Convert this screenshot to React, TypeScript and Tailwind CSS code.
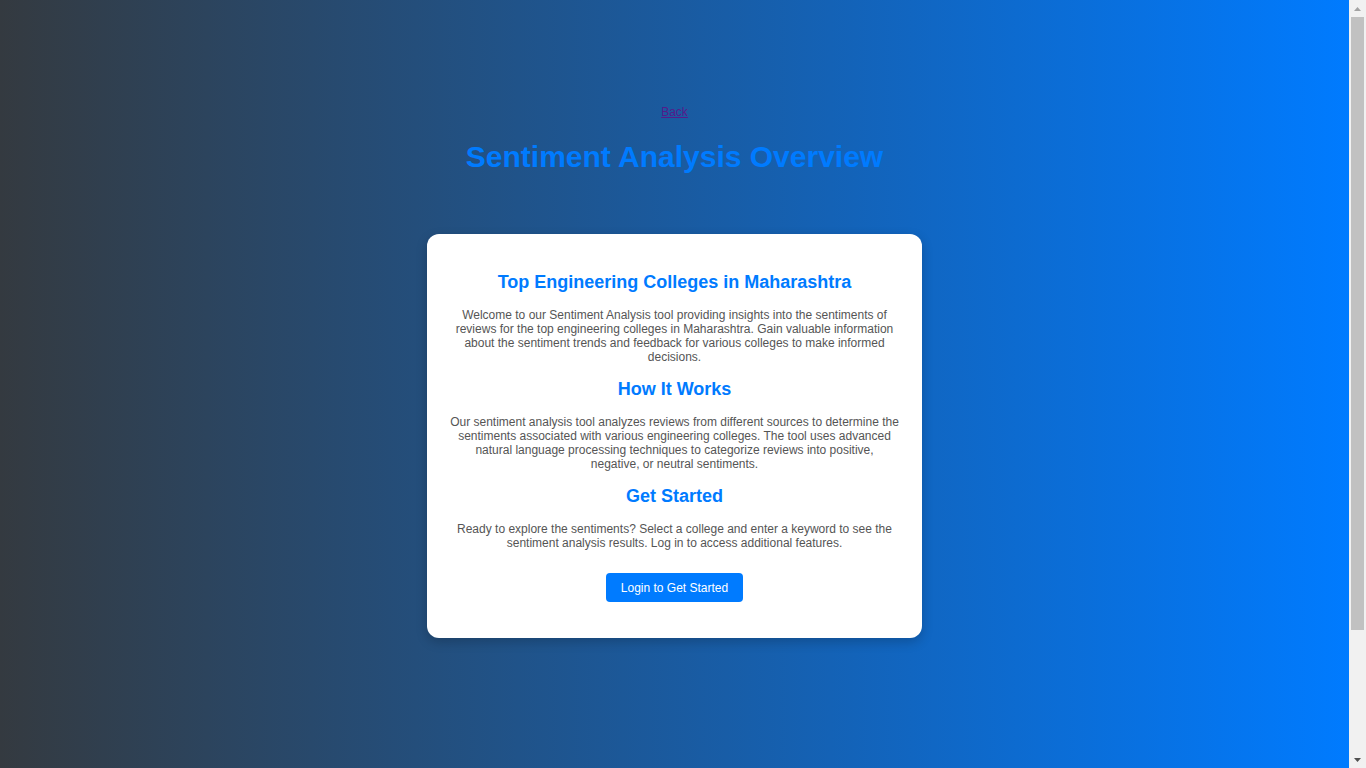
export default function App() {
  return (
    <div className="flex h-[768px] overflow-hidden font-['Liberation_Sans',Arial,sans-serif]">
      <div className="flex flex-1 flex-col items-center bg-[linear-gradient(to_right,#343a40,#007bff)] pt-[105px]">
        <a href="#" className="text-[12px] leading-[14px] text-[#551a8b] underline">
          Back
        </a>
        <h1 className="mt-[21px] text-[30px] font-bold leading-[34px] text-[#007bff]">
          Sentiment Analysis Overview
        </h1>

        <div className="mt-[60px] flex w-[495px] flex-col items-center rounded-[12px] bg-white px-[23px] pt-[38px] pb-[36px] text-center shadow-[0_4px_12px_rgba(0,0,0,0.2)]">
          <h2 className="text-[18px] font-bold leading-[21px] text-[#007bff]">
            Top Engineering Colleges in Maharashtra
          </h2>
          <p className="mt-[15px] text-[12px] leading-[14px] text-[#555]">
            Welcome to our Sentiment Analysis tool providing insights into the sentiments of reviews for the top
            engineering colleges in Maharashtra. Gain valuable information about the sentiment trends and feedback
            for various colleges to make informed decisions.
          </p>

          <h2 className="mt-[15px] text-[18px] font-bold leading-[21px] text-[#007bff]">How It Works</h2>
          <p className="mt-[15px] text-[12px] leading-[14px] text-[#555]">
            Our sentiment analysis tool analyzes reviews from different sources to determine the sentiments
            associated with various engineering colleges. The tool uses advanced natural language processing
            techniques to categorize reviews into positive, negative, or neutral sentiments.
          </p>

          <h2 className="mt-[15px] text-[18px] font-bold leading-[21px] text-[#007bff]">Get Started</h2>
          <p className="mt-[15px] text-[12px] leading-[14px] text-[#555]">
            Ready to explore the sentiments? Select a college and enter a keyword to see the sentiment analysis
            results. Log in to access additional features.
          </p>

          <button
            type="button"
            className="mt-[23px] flex h-[29px] items-center rounded-[4px] bg-[#007bff] px-[15px] text-[12px] text-white"
          >
            Login to Get Started
          </button>
        </div>
      </div>

      {/* scrollbar, as the browser draws it in the reference */}
      <div className="flex w-[17px] flex-col items-center bg-[#f1f1f1]">
        <div className="flex h-[17px] items-center justify-center">
          <svg width="7" height="4" viewBox="0 0 7 4">
            <path d="M3.5 0L7 4H0z" fill="#a3a3a3" />
          </svg>
        </div>
        <div className="h-[613px] w-[13px] bg-[#c1c1c1]" />
        <div className="flex-1" />
        <div className="flex h-[17px] items-center justify-center">
          <svg width="7" height="4" viewBox="0 0 7 4">
            <path d="M0 0H7L3.5 4z" fill="#505050" />
          </svg>
        </div>
      </div>
    </div>
  )
}
